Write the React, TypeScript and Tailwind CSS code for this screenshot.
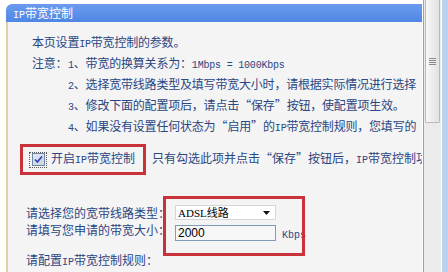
import React from "react";

function A({ children }: { children: React.ReactNode }) {
  return (
    <span className="font-['Liberation_Mono',monospace] text-[10px] whitespace-pre">
      {children}
    </span>
  );
}

function LQ() {
  return <span className="inline-block w-[12px] text-right">“</span>;
}
function RQ() {
  return <span className="inline-block w-[12px] text-left">”</span>;
}

function Checkbox() {
  return (
    <div className="w-[18px] h-[16px] border border-dotted border-[#555] flex items-center justify-center">
      <div className="w-[13px] h-[13px] border border-[#6f86a8] bg-gradient-to-br from-[#e4e9f2] to-[#c9d3e4] flex items-center justify-center">
        <svg width="9" height="9" viewBox="0 0 9 9">
          <path d="M1 4.5 L3.3 7 L8 1.5" fill="none" stroke="#2a48b8" strokeWidth="1.8" />
        </svg>
      </div>
    </div>
  );
}

function Scrollbar() {
  return (
    <div className="w-[18px] h-full shrink-0 border-l border-[#9f9f9f] bg-[#ebebeb] flex flex-col">
      <div className="h-[123px] mx-[1px] border border-t-0 border-[#b9b9b9] rounded-b-[2px] bg-gradient-to-r from-[#f8f8f8] to-[#e2e2e2] flex flex-col items-center justify-center gap-[1px]">
        <div className="w-[7px] h-px bg-[#8a8a8a]" />
        <div className="w-[7px] h-px bg-[#8a8a8a]" />
        <div className="w-[7px] h-px bg-[#8a8a8a]" />
        <div className="w-[7px] h-px bg-[#8a8a8a]" />
      </div>
    </div>
  );
}

export default function App() {
  return (
    <div className="w-[448px] h-[272px] bg-white flex overflow-hidden font-['Noto_Sans_CJK_SC',sans-serif] text-[12px] text-[#2a4682]">
      <div className="w-[423px] h-full shrink-0 pl-[6px] pt-[4px] pr-[1px] flex flex-col">
        <div className="h-[18px] shrink-0 rounded-tl-[6px] bg-gradient-to-b from-[#6a9bee] to-[#4f87e6] pl-[7px] text-white leading-[18px] whitespace-nowrap">
          <A>IP</A>带宽控制
        </div>
        <div className="flex-1 border-l-2 border-[#e6cda6] bg-[#f4f4f4] overflow-hidden whitespace-nowrap">
          <div className="pl-[24px] pt-[11px] leading-[18px] tracking-[-0.2px]">
            <div>
              本页设置<A>IP</A>带宽控制的参数。
            </div>
            <div className="flex">
              <span className="w-[36px] shrink-0">注意：</span>
              <span>
                <A>1</A>、带宽的换算关系为：<A>1Mbps = 1000Kbps</A>
              </span>
            </div>
            <div className="pl-[36px]">
              <A>2</A>、选择宽带线路类型及填写带宽大小时，请根据实际情况进行选择
            </div>
            <div className="pl-[36px]">
              <A>3</A>、修改下面的配置项后，请点击<LQ />保存<RQ />按钮，使配置项生效。
            </div>
            <div className="pl-[36px]">
              <A>4</A>、如果没有设置任何状态为<LQ />启用<RQ />的<A>IP</A>带宽控制规则，您填写的
            </div>
          </div>

          <div className="mt-[6px] flex items-center">
            <div className="ml-[12px] w-[126px] h-[31px] shrink-0 border-[3px] border-[#c9313b] flex items-center pl-[6px]">
              <Checkbox />
              <span className="ml-[4px] leading-[18px]">
                开启<A>IP</A>带宽控制
              </span>
            </div>
            <span className="ml-[6px] leading-[18px]">
              只有勾选此项并点击<LQ />保存<RQ />按钮后，<A>IP</A>带宽控制功能才能生效。
            </span>
          </div>

          <div className="relative mt-[29px] pl-[18px]">
            <div className="flex h-[17px]">
              <span className="w-[149px] shrink-0 leading-[17px]">请选择您的宽带线路类型：</span>
              <div className="mt-[1px] w-[101px] h-[15px] bg-white border border-[#d6d6d6] flex items-center justify-between pl-[2px] pr-[5px] text-black">
                <span className="text-[11px] leading-[13px]">
                  <span className="font-['Liberation_Serif',serif] text-[11px]">ADSL</span>线路
                </span>
                <svg width="7" height="4" viewBox="0 0 7 4">
                  <path d="M0 0 H7 L3.5 4 Z" fill="#111" />
                </svg>
              </div>
            </div>
            <div className="flex h-[20px]">
              <span className="w-[149px] shrink-0 leading-[17px]">请填写您申请的带宽大小：</span>
              <div className="mt-[4px] w-[101px] h-[16px] border border-[#7f9db9] bg-[#f7f7f7] pl-[2px] text-[12px] leading-[14px] text-black font-['Liberation_Sans',sans-serif]">
                2000
              </div>
              <span className="mt-[4px] ml-[6px] leading-[16px]">
                <A>Kbps</A>
              </span>
            </div>
            <div className="absolute left-[155px] top-[-8px] w-[142px] h-[60px] border-[3px] border-[#c9313b]" />
          </div>

          <div className="mt-[10px] pl-[18px] leading-[17px]">
            请配置<A>IP</A>带宽控制规则：
          </div>
        </div>
      </div>
      <Scrollbar />
      <div className="w-px h-full bg-white shrink-0" />
      <div className="w-[6px] h-full bg-[#b7d1ef] shrink-0" />
    </div>
  );
}
